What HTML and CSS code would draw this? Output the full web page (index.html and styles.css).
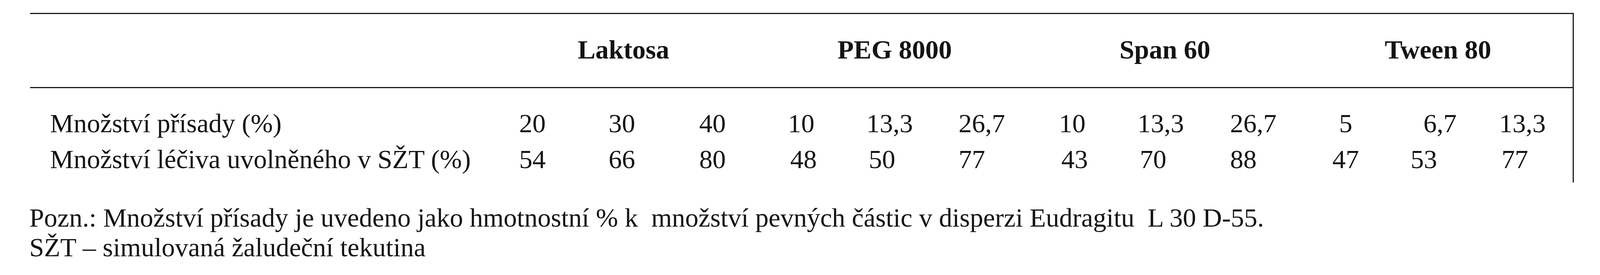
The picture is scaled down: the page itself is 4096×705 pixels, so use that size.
FILE: index.html
```html
<!DOCTYPE html>
<html lang="cs">
<head>
<meta charset="utf-8">
<title>Tabulka</title>
<link rel="stylesheet" href="styles.css">
</head>
<body>
<div class="page">
  <div class="tbl">
    <div class="head">
      <div class="h-label"></div>
      <div class="grp g-lak">Laktosa</div>
      <div class="grp g-peg">PEG 8000</div>
      <div class="grp g-span">Span 60</div>
      <div class="grp g-tween">Tween 80</div>
    </div>
    <div class="body">
      <div class="row">
        <div class="lbl">Množství přísady (%)</div>
        <div class="c">20</div>
        <div class="c">30</div>
        <div class="c">40</div>
        <div class="c one">10</div>
        <div class="c one">13,3</div>
        <div class="c">26,7</div>
        <div class="c one">10</div>
        <div class="c one">13,3</div>
        <div class="c">26,7</div>
        <div class="c five">5</div>
        <div class="c six">6,7</div>
        <div class="c one">13,3</div>
        <div class="c"></div>
      </div>
      <div class="row">
        <div class="lbl">Množství léčiva uvolněného v SŽT (%)</div>
        <div class="c">54</div>
        <div class="c">66</div>
        <div class="c">80</div>
        <div class="c">48</div>
        <div class="c">50</div>
        <div class="c">77</div>
        <div class="c">43</div>
        <div class="c">70</div>
        <div class="c">88</div>
        <div class="c">47</div>
        <div class="c">53</div>
        <div class="c">77</div>
        <div class="c"></div>
      </div>
    </div>
  </div>
  <div class="notes">
    <p class="note">Pozn.: Množství přísady je uvedeno jako hmotnostní % k&nbsp; množství pevných částic v disperzi Eudragitu&nbsp; L 30 D-55.</p>
    <p class="note">SŽT – simulovaná žaludeční tekutina</p>
  </div>
</div>
</body>
</html>
```

FILE: styles.css
```css
html, body {
  margin: 0;
  padding: 0;
  background: #ffffff;
}

body {
  font-family: "Liberation Serif", "Times New Roman", serif;
  font-size: 68px;
  color: #141414;
}

.page {
  padding-top: 33px;
  width: 4096px;
  height: 705px;
  box-sizing: border-box;
  overflow: hidden;
}

.tbl {
  margin-left: 77px;
  width: 3952px;
  box-sizing: border-box;
  border-top: 3px solid #1c1c1c;
  border-right: 3.5px solid #1c1c1c;
}

.head,
.row {
  display: grid;
  grid-template-columns: 1252px 229px 232px 233px 201px 230px 263px 201px 231px 262px 200px 233px 1fr;
}

.head {
  padding-top: 57px;
  padding-bottom: 62px;
  line-height: 68px;
  border-bottom: 3px solid #1c1c1c;
  font-weight: bold;
}

.grp {
  grid-column: span 3;
  white-space: nowrap;
}

.g-lak { padding-left: 150px; }
.g-peg { padding-left: 121px; }
.g-span { padding-left: 149px; }
.g-tween { padding-left: 134px; }

.body {
  padding-top: 45px;
  padding-bottom: 14px;
}

.row {
  line-height: 91.5px;
}

.lbl {
  padding-left: 51px;
  white-space: nowrap;
}

.c {
  white-space: nowrap;
}

.one { margin-left: -6px; }
.five { padding-left: 17px; }
.six { padding-left: 33px; }

.notes {
  margin-top: 52px;
  padding-left: 75px;
  line-height: 76px;
}

.note {
  margin: 0;
  white-space: nowrap;
}
```
